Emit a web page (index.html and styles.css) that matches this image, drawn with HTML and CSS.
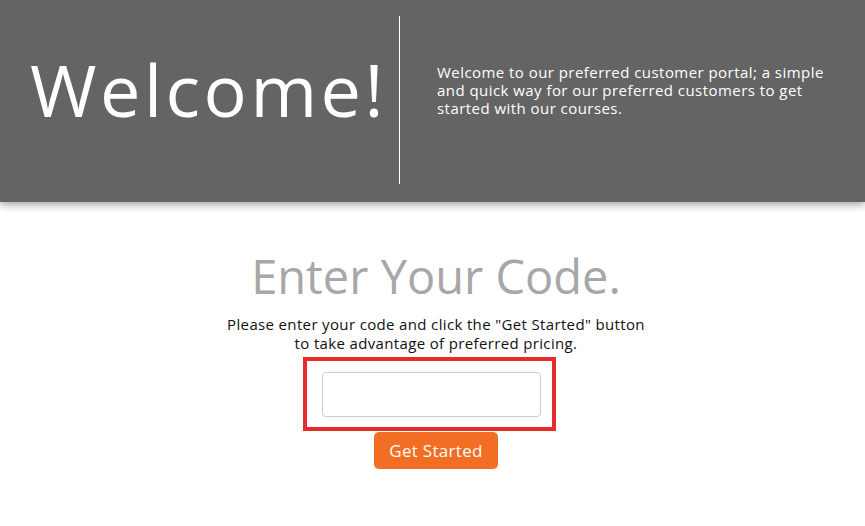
FILE: index.html
```html
<!DOCTYPE html>
<html>
<head>
<meta charset="utf-8">
<link rel="stylesheet" href="styles.css">
</head>
<body>
<header class="hero">
  <div class="hero-left"><h1 class="hero-title">Welcome!</h1></div>
  <div class="hero-divider"></div>
  <div class="hero-right">
    <p class="hero-text">Welcome to our preferred customer portal; a simple and quick way for our preferred customers to get started with our courses.</p>
  </div>
</header>
<main class="code-section">
  <h2 class="code-title">Enter Your Code.</h2>
  <p class="code-desc">Please enter your code and click the "Get Started" button<br>to take advantage of preferred pricing.</p>
  <div class="highlight">
    <input class="code-input" type="text">
  </div>
  <button class="cta">Get Started</button>
</main>
</body>
</html>
```
FILE: styles.css
```css
html, body {
  margin: 0;
  padding: 0;
  background: #ffffff;
  font-family: "Open Sans", "DejaVu Sans", sans-serif;
}
.hero {
  height: 202px;
  background: #646464;
  box-shadow: 0 3px 8px rgba(0,0,0,0.35);
  display: flex;
  align-items: center;
  box-sizing: border-box;
}
.hero-left {
  width: 399px;
  box-sizing: border-box;
  padding-left: 30px;
  padding-bottom: 24px;
}
.hero-title {
  margin: 0;
  color: #ffffff;
  font-weight: 400;
  font-size: 72px;
  line-height: 1;
  letter-spacing: 3.5px;
}
.hero-divider {
  width: 1px;
  height: 168px;
  background: #ffffff;
  margin-top: -3px;
}
.hero-right {
  padding-left: 37px;
  width: 392px;
  padding-bottom: 22px;
}
.hero-text {
  margin: 0;
  color: #ffffff;
  font-size: 15px;
  line-height: 18px;
  letter-spacing: 0.45px;
}
.code-section {
  display: flex;
  flex-direction: column;
  align-items: center;
  padding-top: 46px;
  padding-left: 7px;
}
.code-title {
  margin: 0;
  color: #a7a7a9;
  font-weight: 400;
  font-size: 47px;
  line-height: 56px;
}
.code-desc {
  margin: 11px 0 0 0;
  color: #111111;
  font-size: 15px;
  line-height: 19px;
  letter-spacing: 0.35px;
  text-align: center;
}
.highlight {
  margin-top: 4px;
  margin-right: 13px;
  width: 253px;
  height: 74px;
  box-sizing: border-box;
  border: 4px solid #e52b2b;
  display: flex;
  align-items: center;
  justify-content: center;
}
.code-input {
  width: 219px;
  height: 45px;
  box-sizing: border-box;
  border: 1px solid #cccccc;
  border-radius: 4px;
  background: #ffffff;
  outline: none;
  margin: 0 0 0 4px;
}
.cta {
  margin-top: 1px;
  width: 124px;
  height: 37px;
  border: none;
  border-radius: 5px;
  background: #f26e25;
  color: #ffffff;
  font-family: "Open Sans", "DejaVu Sans", sans-serif;
  font-size: 17px;
  letter-spacing: 0.3px;
  padding: 0;
}
```
